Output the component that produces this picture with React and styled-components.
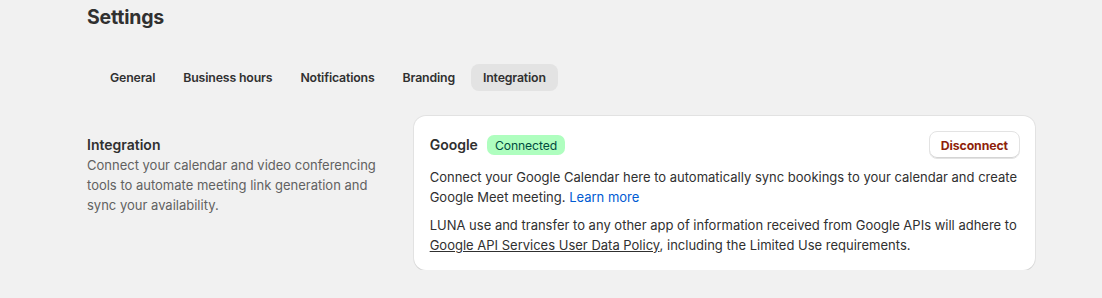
import styled, { createGlobalStyle } from 'styled-components'

const GlobalStyle = createGlobalStyle`
  body {
    margin: 0;
    background: #f1f1f1;
    font-family: Inter, "Noto Sans", sans-serif;
    color: #303030;
    -webkit-font-smoothing: antialiased;
  }
`

const tabs = ['General', 'Business hours', 'Notifications', 'Branding', 'Integration']

const App = () => {
  const active = 'Integration'

  return (
    <>
      <GlobalStyle />
      <Page>
        <Title>Settings</Title>

        <TabList>
          {tabs.map((tab) => (
            <Tab key={tab} $active={tab === active}>
              {tab}
            </Tab>
          ))}
        </TabList>

        <Section>
          <Annotation>
            <SectionTitle>Integration</SectionTitle>
            <SectionText>
              Connect your calendar and video conferencing tools to automate meeting link
              generation and sync your availability.
            </SectionText>
          </Annotation>

          <Card>
            <CardHeader>
              <CardTitle>Google</CardTitle>
              <Badge>Connected</Badge>
              <DangerButton>Disconnect</DangerButton>
            </CardHeader>
            <Paragraph>
              Connect your Google Calendar here to automatically sync bookings to your calendar
              and create Google Meet meeting. <BlueLink href="#">Learn more</BlueLink>
            </Paragraph>
            <Paragraph>
              LUNA use and transfer to any other app of information received from Google APIs
              will adhere to <PlainLink href="#">Google API Services User Data Policy</PlainLink>,
              including the Limited Use requirements.
            </Paragraph>
          </Card>
        </Section>
      </Page>
    </>
  )
}

const Page = styled.div`
  width: 948px;
  padding: 5px 0 0 87px;
`

const Title = styled.h1`
  margin: 0;
  font-size: 19.5px;
  line-height: 24px;
  font-weight: 700;
  letter-spacing: -0.2px;
  color: #303030;
`

const TabList = styled.div`
  display: flex;
  gap: 4px;
  margin: 35px 0 0 11px;
`

const Tab = styled.button`
  border: none;
  height: 27px;
  padding: 0 12px;
  border-radius: 8px;
  background: ${(props) => (props.$active ? '#e3e3e3' : 'transparent')};
  font-family: inherit;
  font-size: 12.3px;
  letter-spacing: -0.15px;
  font-weight: 600;
  color: #303030;
  cursor: pointer;
`

const Section = styled.div`
  display: grid;
  grid-template-columns: 1fr 2fr;
  gap: 16px;
  margin-top: 25px;
`

const Annotation = styled.div`
  padding-top: 19px;
`

const SectionTitle = styled.h2`
  margin: 0;
  font-size: 14px;
  line-height: 20px;
  font-weight: 600;
  color: #303030;
`

const SectionText = styled.p`
  margin: 0;
  font-size: 13px;
  line-height: 20px;
  color: #616161;
  max-width: 300px;
`

const Card = styled.div`
  background: #ffffff;
  border-radius: 12px;
  padding: 15px 15px 15px 16px;
  box-shadow: 0 1px 0 0 rgba(26, 26, 26, 0.07), 0 0 0 1px rgba(0, 0, 0, 0.06);
`

const CardHeader = styled.div`
  display: flex;
  align-items: center;
  gap: 9px;
  height: 28px;
  margin-bottom: 8px;
`

const CardTitle = styled.h3`
  margin: 0;
  font-size: 14px;
  line-height: 20px;
  font-weight: 600;
`

const Badge = styled.span`
  display: inline-flex;
  align-items: center;
  height: 20px;
  padding: 0 8px;
  border-radius: 7px;
  background: #affebf;
  color: #014b40;
  font-size: 12.2px;
  letter-spacing: -0.1px;
`

const DangerButton = styled.button`
  margin-left: auto;
  height: 28px;
  padding: 0 11px;
  border-radius: 8px;
  border: 1px solid #e3e3e3;
  background: #ffffff;
  box-shadow: inset 0 -1px 0 #d4d4d4;
  font-family: inherit;
  font-size: 12.3px;
  letter-spacing: -0.1px;
  font-weight: 650;
  color: #8e1f0b;
  cursor: pointer;
`

const Paragraph = styled.p`
  margin: 0 0 8px;
  font-size: 13px;
  line-height: 20px;
  color: #303030;

  &:last-child {
    margin-bottom: 0;
  }
`

const BlueLink = styled.a`
  color: #005bd3;
  text-decoration: none;
`

const PlainLink = styled.a`
  color: #303030;
  text-decoration: underline;
`

export default App
